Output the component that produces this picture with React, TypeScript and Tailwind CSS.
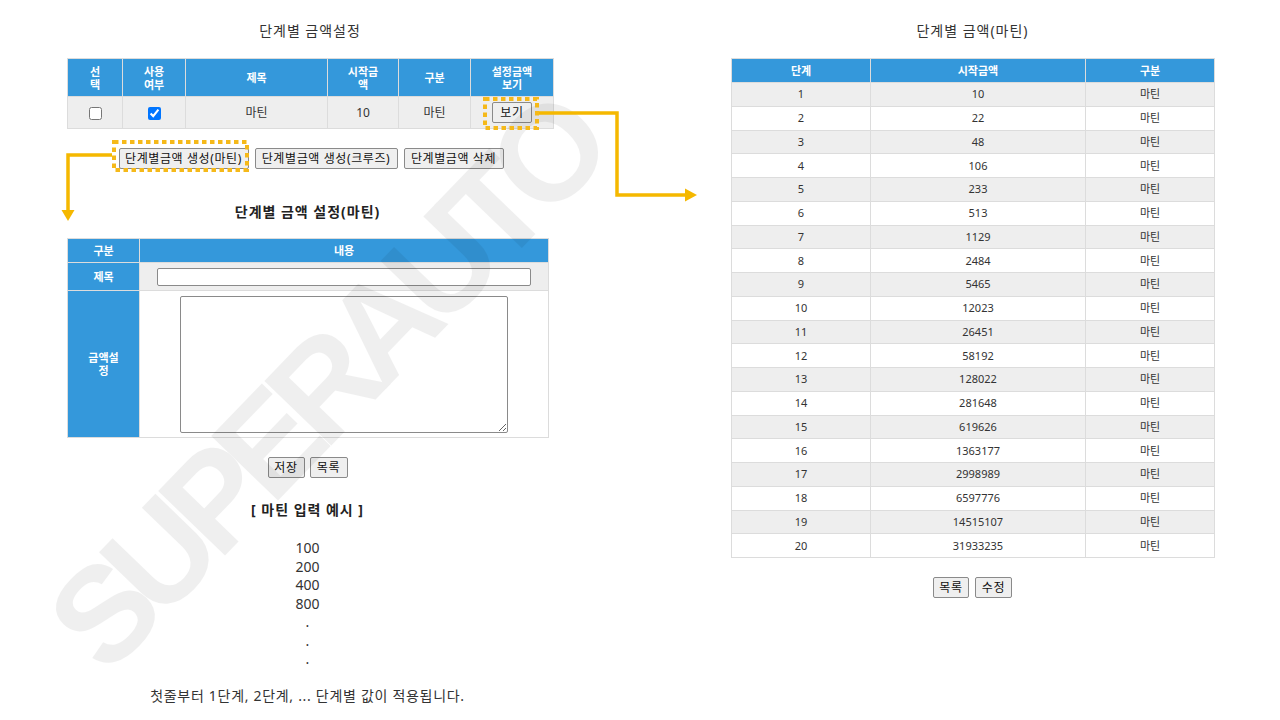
import React from "react";

const amounts = [
  10, 22, 48, 106, 233, 513, 1129, 2484, 5465, 12023, 26451, 58192, 128022,
  281648, 619626, 1363177, 2998989, 6597776, 14515107, 31933235,
];

function Btn({ children, className = "" }: { children: React.ReactNode; className?: string }) {
  return (
    <button
      className={
        "inline-flex items-center justify-center whitespace-nowrap h-[21px] px-[6px] bg-[#efefef] border border-[#8a8a8a] rounded-[2px] text-[12px] leading-[19px] text-[#111] tracking-[0.05em] " +
        className
      }
    >
      {children}
    </button>
  );
}

const th =
  "bg-[#3498db] text-white font-bold text-[11px] leading-[13px] border border-[#dcdcdc] text-center align-middle p-0";
const td = "border border-[#dcdcdc] text-center align-middle p-0";

export default function App() {
  return (
    <div className="relative w-[1280px] h-[720px] overflow-hidden bg-white text-[#333] font-['Noto_Sans','Noto_Sans_CJK_KR',sans-serif]">
      <div className="flex pl-[67px] gap-[178px]">
        {/* LEFT COLUMN */}
        <div className="w-[486px] flex flex-col">
          <div className="pt-[21px] h-[41px] text-center text-[14px] leading-[20px] tracking-[0.07em]">단계별 금액설정</div>
          <table className="mt-[17px] w-[486px] table-fixed border-collapse">
            <colgroup>
              <col className="w-[55px]" />
              <col className="w-[63px]" />
              <col className="w-[142px]" />
              <col className="w-[71px]" />
              <col className="w-[72px]" />
              <col className="w-[83px]" />
            </colgroup>
            <thead>
              <tr className="h-[38px]">
                <th className={th}>선<br />택</th>
                <th className={th}>사용<br />여부</th>
                <th className={th}>제목</th>
                <th className={th}>시작금<br />액</th>
                <th className={th}>구분</th>
                <th className={th}>설정금액<br />보기</th>
              </tr>
            </thead>
            <tbody>
              <tr className="h-[32px] bg-[#eeeeee] text-[12px]">
                <td className={td}>
                  <input type="checkbox" className="w-[13px] h-[13px] align-middle m-0" readOnly />
                </td>
                <td className={td}>
                  <input type="checkbox" defaultChecked className="w-[13px] h-[13px] align-middle m-0" />
                </td>
                <td className={td}>마틴</td>
                <td className={td}>10</td>
                <td className={td}>마틴</td>
                <td className={td}>
                  <Btn className="h-[20px] w-[40px] px-0">보기</Btn>
                </td>
              </tr>
            </tbody>
          </table>

          <div className="mt-[19px] flex justify-center gap-[6px] pl-[2px]">
            <Btn className="w-[130px] px-0">단계별금액 생성(마틴)</Btn>
            <Btn className="w-[143px] px-0">단계별금액 생성(크루즈)</Btn>
            <Btn className="w-[100px] px-0">단계별금액 삭제</Btn>
          </div>

          <div className="w-[481px] flex flex-col">
            <div className="mt-[33px] h-[20px] text-center text-[14px] leading-[20px] font-bold text-[#222] tracking-[0.07em]">
              단계별 금액 설정(마틴)
            </div>
            <table className="mt-[16px] w-[481px] table-fixed border-collapse">
              <colgroup>
                <col className="w-[72px]" />
                <col className="w-[409px]" />
              </colgroup>
              <tbody>
                <tr className="h-[24px]">
                  <th className={th}>구분</th>
                  <th className={th}>내용</th>
                </tr>
                <tr className="h-[28px]">
                  <th className={th}>제목</th>
                  <td className={td + " bg-[#eeeeee]"}>
                    <div className="flex justify-center">
                      <input
                        type="text"
                        className="w-[374px] h-[18px] bg-white border border-[#8a8a8a] rounded-[2px] outline-none"
                      />
                    </div>
                  </td>
                </tr>
                <tr className="h-[147px]">
                  <th className={th}>금액설<br />정</th>
                  <td className={td + " bg-white"}>
                    <div className="flex justify-center">
                      <textarea className="block w-[328px] h-[137px] bg-white border border-[#8a8a8a] rounded-[2px] outline-none resize" />
                    </div>
                  </td>
                </tr>
              </tbody>
            </table>

            <div className="mt-[19px] flex justify-center gap-[5px]">
              <Btn className="h-[20px] w-[37px] px-0">저장</Btn>
              <Btn className="h-[20px] w-[38px] px-0">목록</Btn>
            </div>

            <div className="mt-[22px] h-[20px] text-center text-[14px] leading-[20px] font-bold text-[#222] tracking-[0.07em]">
              [ 마틴 입력 예시 ]
            </div>

            <div className="mt-[19px] flex flex-col items-center text-[14px] leading-[18.5px] text-[#333]">
              <div>100</div>
              <div>200</div>
              <div>400</div>
              <div>800</div>
              <div>.</div>
              <div>.</div>
              <div>.</div>
            </div>

            <div className="mt-[17px] h-[20px] text-center text-[14px] leading-[20px] text-[#333] tracking-[0.05em] whitespace-nowrap">
              첫줄부터 1단계, 2단계, ... 단계별 값이 적용됩니다.
            </div>
          </div>
        </div>

        {/* RIGHT COLUMN */}
        <div className="w-[483px] flex flex-col">
          <div className="pt-[21px] h-[41px] text-center text-[14px] leading-[20px] tracking-[0.07em]">단계별 금액(마틴)</div>
          <table className="mt-[17px] w-[483px] table-fixed border-collapse text-[11px] text-[#333]">
            <colgroup>
              <col className="w-[139px]" />
              <col className="w-[215px]" />
              <col className="w-[129px]" />
            </colgroup>
            <thead>
              <tr className="h-[24px]">
                <th className={th}>단계</th>
                <th className={th}>시작금액</th>
                <th className={th}>구분</th>
              </tr>
            </thead>
            <tbody>
              {amounts.map((a, i) => (
                <tr key={i} className={"h-[23.75px] " + (i % 2 === 0 ? "bg-[#eeeeee]" : "bg-white")}>
                  <td className={td + " leading-[14px]"}>{i + 1}</td>
                  <td className={td + " leading-[14px]"}>{a}</td>
                  <td className={td + " leading-[14px]"}>마틴</td>
                </tr>
              ))}
            </tbody>
          </table>
          <div className="mt-[19px] flex justify-center gap-[6px]">
            <Btn className="h-[20px] w-[36px] px-0">목록</Btn>
            <Btn className="h-[20px] w-[37px] px-0">수정</Btn>
          </div>
        </div>
      </div>

      {/* Watermark */}
      <div className="pointer-events-none absolute left-[325px] top-[385px] -translate-x-1/2 -translate-y-1/2 -rotate-[46deg] whitespace-nowrap font-['Liberation_Sans',Arial,sans-serif] font-bold text-[135px] leading-none tracking-[-0.1em] text-black opacity-[0.06]">
        SUPERAUTO
      </div>

      {/* Annotation arrows and dotted frames */}
      <svg className="pointer-events-none absolute left-0 top-0" width="1280" height="720" viewBox="0 0 1280 720">
        <g fill="none" stroke="#f5b91a" strokeWidth="4" strokeDasharray="4.5 3.5">
          <rect x="485" y="99" width="52" height="29" />
          <rect x="114" y="142" width="133" height="28" />
        </g>
        <g fill="none" stroke="#f5b800" strokeWidth="3.5" strokeLinejoin="miter">
          <path d="M112 155 H68 V212" />
          <path d="M539 113 H617 V195 H686" />
        </g>
        <polygon points="61.5,210 74.5,210 68,221" fill="#f5b800" />
        <polygon points="685,188.5 685,201.5 697,195" fill="#f5b800" />
      </svg>
    </div>
  );
}
